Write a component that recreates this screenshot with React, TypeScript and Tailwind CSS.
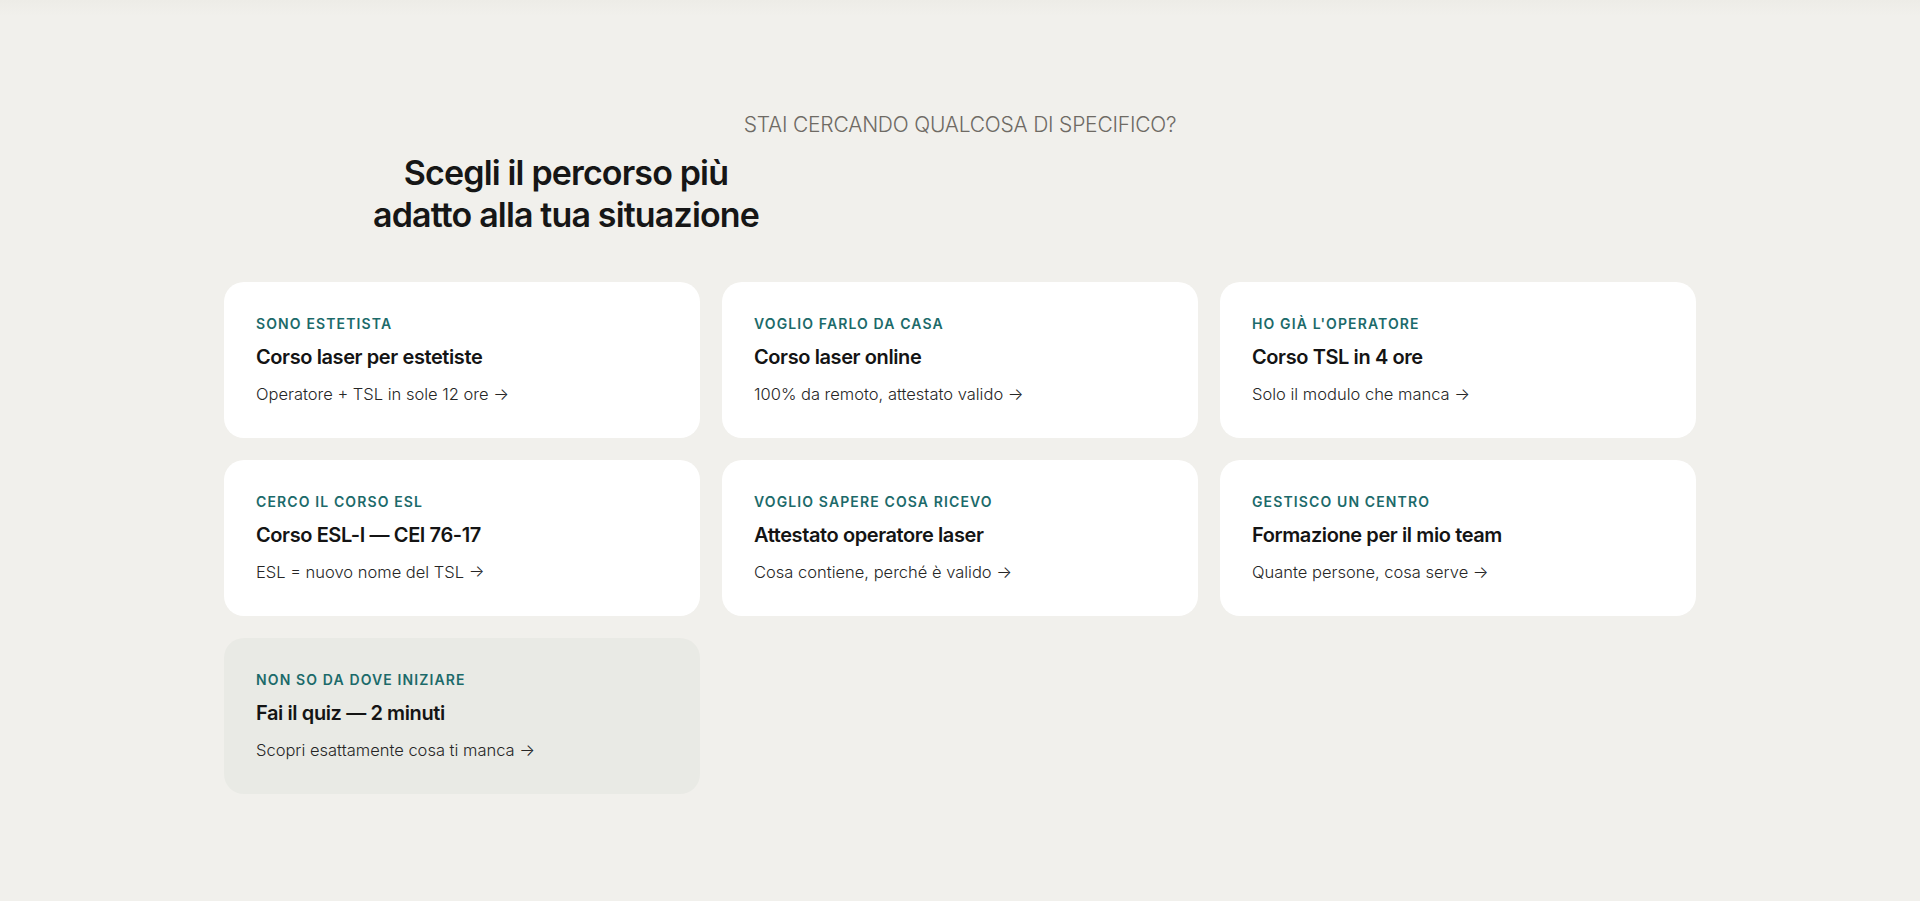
const paths = [
  {
    eyebrow: "Sono estetista",
    title: "Corso laser per estetiste",
    note: "Operatore + TSL in sole 12 ore",
  },
  {
    eyebrow: "Voglio farlo da casa",
    title: "Corso laser online",
    note: "100% da remoto, attestato valido",
  },
  {
    eyebrow: "Ho già l'operatore",
    title: "Corso TSL in 4 ore",
    note: "Solo il modulo che manca",
  },
  {
    eyebrow: "Cerco il corso ESL",
    title: "Corso ESL-I — CEI 76-17",
    note: "ESL = nuovo nome del TSL",
  },
  {
    eyebrow: "Voglio sapere cosa ricevo",
    title: "Attestato operatore laser",
    note: "Cosa contiene, perché è valido",
  },
  {
    eyebrow: "Gestisco un centro",
    title: "Formazione per il mio team",
    note: "Quante persone, cosa serve",
  },
  {
    eyebrow: "Non so da dove iniziare",
    title: "Fai il quiz — 2 minuti",
    note: "Scopri esattamente cosa ti manca",
    muted: true,
  },
];

function PathCard({ eyebrow, title, note, muted }: { eyebrow: string; title: string; note: string; muted?: boolean }) {
  return (
    <a
      href="#"
      className={`block rounded-[20px] px-8 pt-8 pb-8 ${muted ? "bg-[#e9eae5]" : "bg-white"}`}
    >
      <div className="text-[14px] leading-5 font-semibold uppercase tracking-[0.08em] text-[#1c6a6a]">
        {eyebrow}
      </div>
      <div className="mt-[9px] text-[20px] leading-7 font-semibold tracking-[-0.02em] text-[#141414]">
        {title}
      </div>
      <div className="mt-[11px] text-[16.5px] leading-6 font-light text-[#262626]">
        {note} →
      </div>
    </a>
  );
}

export default function App() {
  return (
    <div className="min-h-[901px] bg-[#f1f0ec] font-['Inter',sans-serif]">
      {/* tail of the previous section */}
      <div className="h-4 bg-gradient-to-b from-[#edece7] to-[#f1f0ec]" />

      <section className="mx-auto w-[1472px] pt-[95px] pb-16">
        <p className="text-center text-[21px] leading-7 font-light uppercase tracking-[-0.01em] text-[#6e6a64]">
          Stai cercando qualcosa di specifico?
        </p>
        <h2 className="mt-[13px] w-[684px] text-center text-[34px] leading-[42px] font-semibold tracking-[-0.025em] text-[#161616]">
          Scegli il percorso più
          <br />
          adatto alla tua situazione
        </h2>

        <div className="mt-[46px] grid grid-cols-3 gap-[22px]">
          {paths.map((p) => (
            <PathCard key={p.eyebrow} {...p} />
          ))}
        </div>
      </section>
    </div>
  );
}
